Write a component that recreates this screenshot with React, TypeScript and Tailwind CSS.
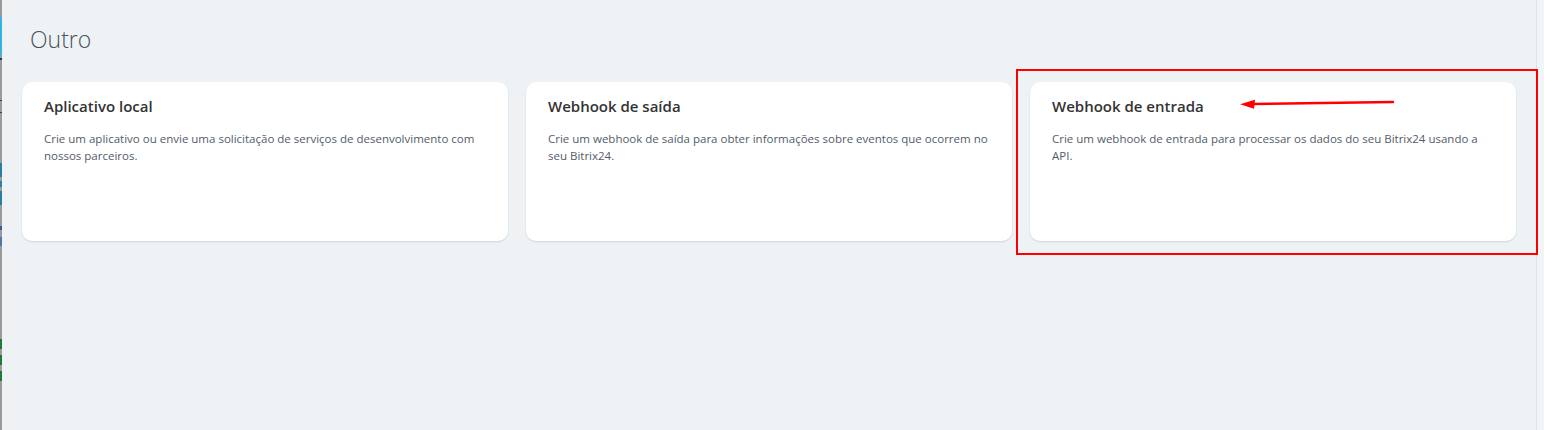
import type { ReactNode } from 'react'

type Tile = {
  title: string
  text: string
}

const tiles: Tile[] = [
  {
    title: 'Aplicativo local',
    text: 'Crie um aplicativo ou envie uma solicitação de serviços de desenvolvimento com nossos parceiros.',
  },
  {
    title: 'Webhook de saída',
    text: 'Crie um webhook de saída para obter informações sobre eventos que ocorrem no seu Bitrix24.',
  },
  {
    title: 'Webhook de entrada',
    text: 'Crie um webhook de entrada para processar os dados do seu Bitrix24 usando a API.',
  },
]

// strip of the cropped sidebar on the left edge
const SideStrip = () => (
  <div className="flex w-[2px] shrink-0 flex-col bg-[#9a9a9a]">
    <div className="h-[17px]" />
    <div className="h-[38px] bg-[#35b3e0]" />
    <div className="h-[3px]" />
    <div className="h-[2px] bg-[#1a3a7a]" />
    <div className="h-[40px]" />
    <div className="h-[1px] bg-[#4a3a3a]" />
    <div className="h-[11px]" />
    <div className="h-[1px] bg-[#4a3a3a]" />
    <div className="h-[50px]" />
    <div className="h-[14px] bg-[#2a7fa8]" />
    <div className="h-[4px]" />
    <div className="h-[6px] bg-[#2a7fa8]" />
    <div className="h-[4px]" />
    <div className="h-[14px] bg-[#2a7fa8]" />
    <div className="h-[21px]" />
    <div className="h-[4px] bg-[#3a5a9a]" />
    <div className="h-[7px]" />
    <div className="h-[9px] bg-[#4a7aa8]" />
    <div className="h-[93px]" />
    <div className="h-[10px] bg-[#1a7a3a]" />
    <div className="h-[6px]" />
    <div className="h-[10px] bg-[#1a7a3a]" />
    <div className="h-[6px]" />
    <div className="h-[10px] bg-[#1a7a3a]" />
    <div className="flex-1" />
  </div>
)

const Card = ({ tile, children }: { tile: Tile; children?: ReactNode }) => (
  <div className="relative">
    <div className="h-[159px] rounded-[10px] bg-white pt-[13px] pr-[18px] pl-[22px] shadow-[0_1px_2px_rgba(0,0,0,0.12)]">
      <p className="text-[15px] font-semibold leading-[22px] text-[#333]">{tile.title}</p>
      <p className="mt-[13px] text-[11.5px] leading-[17px] text-[#535c69]">{tile.text}</p>
    </div>
    {children}
  </div>
)

const Highlight = () => (
  <>
    <div className="pointer-events-none absolute -top-[13px] -right-[22px] -bottom-[14px] -left-[14px] border-2 border-[#ff0000]" />
    <svg
      className="pointer-events-none absolute top-[14px] left-[208px]"
      width="160"
      height="14"
      viewBox="0 0 160 14"
    >
      <line x1="16" y1="8" x2="155" y2="6" stroke="#ff0000" strokeWidth="2.5" strokeLinecap="round" />
      <polygon points="2,8.3 17,3.8 16,12.8" fill="#ff0000" />
    </svg>
  </>
)

const App = () => {
  return (
    <div
      className="flex h-[430px] w-[1544px] overflow-hidden bg-[#eef2f4]"
      style={{ fontFamily: '"Open Sans", "Noto Sans", Arial, sans-serif' }}
    >
      <SideStrip />
      <main className="flex-1 px-[20px] pt-[23px]">
        <h2 className="pl-[8px] text-[23px] font-light leading-[32px] text-[#4a525c]">Outro</h2>
        <div className="mt-[27px] grid grid-cols-3 gap-[18px]">
          {tiles.map((tile, i) => (
            <Card key={tile.title} tile={tile}>
              {i === 2 && <Highlight />}
            </Card>
          ))}
        </div>
      </main>
      <div className="w-[1px] shrink-0 bg-[#dde3e7]" />
      <div className="w-[7px] shrink-0 bg-[#f2f5f7]" />
    </div>
  )
}

export default App
